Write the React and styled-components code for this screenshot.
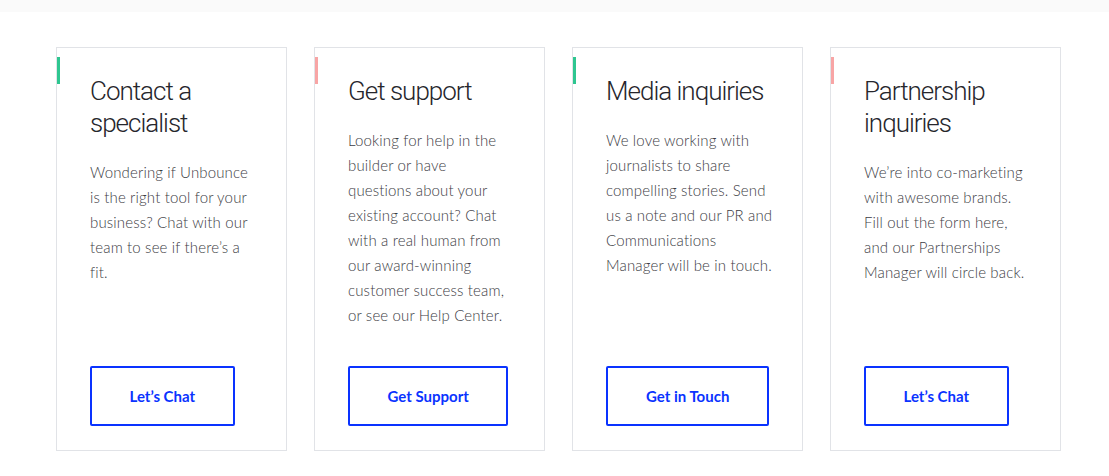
import styled, { createGlobalStyle } from "styled-components"

const Global = createGlobalStyle`
    body {
        margin: 0;
        background: #fff;
        font-family: "Lato", "Liberation Sans", sans-serif;
    }
`
const TopBand = styled.div`
    height: 12px;
    background: #fafafa;
`
const Row = styled.main`
    display: flex;
    gap: 27px;
    padding: 35px 0 0 56px;
    box-sizing: border-box;
`
const Card = styled.section`
    position: relative;
    box-sizing: border-box;
    width: 231px;
    height: 404px;
    border: 1px solid #e1e3e7;
    display: flex;
    flex-direction: column;
    padding: 27px 29px 24px 33px;
`
const Accent = styled.span`
    position: absolute;
    left: 0;
    top: 9px;
    width: 3px;
    height: 27px;
    background: ${p => p.$color};
`
const Title = styled.h2`
    margin: 0 0 21px;
    font-family: "Roboto", "Liberation Sans", sans-serif;
    font-weight: 300;
    font-size: 26px;
    line-height: 32px;
    color: #26262c;
    letter-spacing: -1px;
`
const Text = styled.p`
    margin: 0;
    max-width: ${p => p.$measure || "none"};
    font-family: "Lato", "Liberation Sans", sans-serif;
    font-weight: 300;
    font-size: 15px;
    line-height: 25px;
    letter-spacing: 0.15px;
    color: #3c3c44;
`
const Button = styled.a`
    margin-top: auto;
    align-self: flex-start;
    box-sizing: border-box;
    height: 60px;
    padding: 0 ${p => p.$pad}px;
    display: flex;
    align-items: center;
    justify-content: center;
    border: 2px solid #0a33ff;
    border-radius: 2px;
    color: #0a33ff;
    font-family: "Lato", "Liberation Sans", sans-serif;
    font-weight: 700;
    font-size: 15px;
    text-decoration: none;
    cursor: pointer;
`

const cards = [
    {
        id: 1, accent: "#2ec690", title: "Contact a specialist",
        text: "Wondering if Unbounce is the right tool for your business? Chat with our team to see if there’s a fit.",
        cta: "Let’s Chat", pad: 37.5,
    },
    {
        id: 2, accent: "#f8a5a5", title: "Get support",
        text: "Looking for help in the builder or have questions about your existing account? Chat with a real human from our award-winning customer success team, or see our Help Center.",
        cta: "Get Support", pad: 37.5, measure: "160px",
    },
    {
        id: 3, accent: "#2ec690", title: "Media inquiries",
        text: "We love working with journalists to share compelling stories. Send us a note and our PR and Communications Manager will be in touch.",
        cta: "Get in Touch", pad: 38,
    },
    {
        id: 4, accent: "#f8a5a5", title: "Partnership inquiries",
        text: "We’re into co-marketing with awesome brands. Fill out the form here, and our Partnerships Manager will circle back.",
        cta: "Let’s Chat", pad: 37.5,
    },
]

const App = () => {
    return (
        <div>
            <Global />
            <TopBand />
            <Row>
                {cards.map((c) => (
                    <Card key={c.id}>
                        <Accent $color={c.accent} />
                        <Title>{c.title}</Title>
                        <Text $measure={c.measure}>{c.text}</Text>
                        <Button $pad={c.pad}>{c.cta}</Button>
                    </Card>
                ))}
            </Row>
        </div>
    )
}
export default App
